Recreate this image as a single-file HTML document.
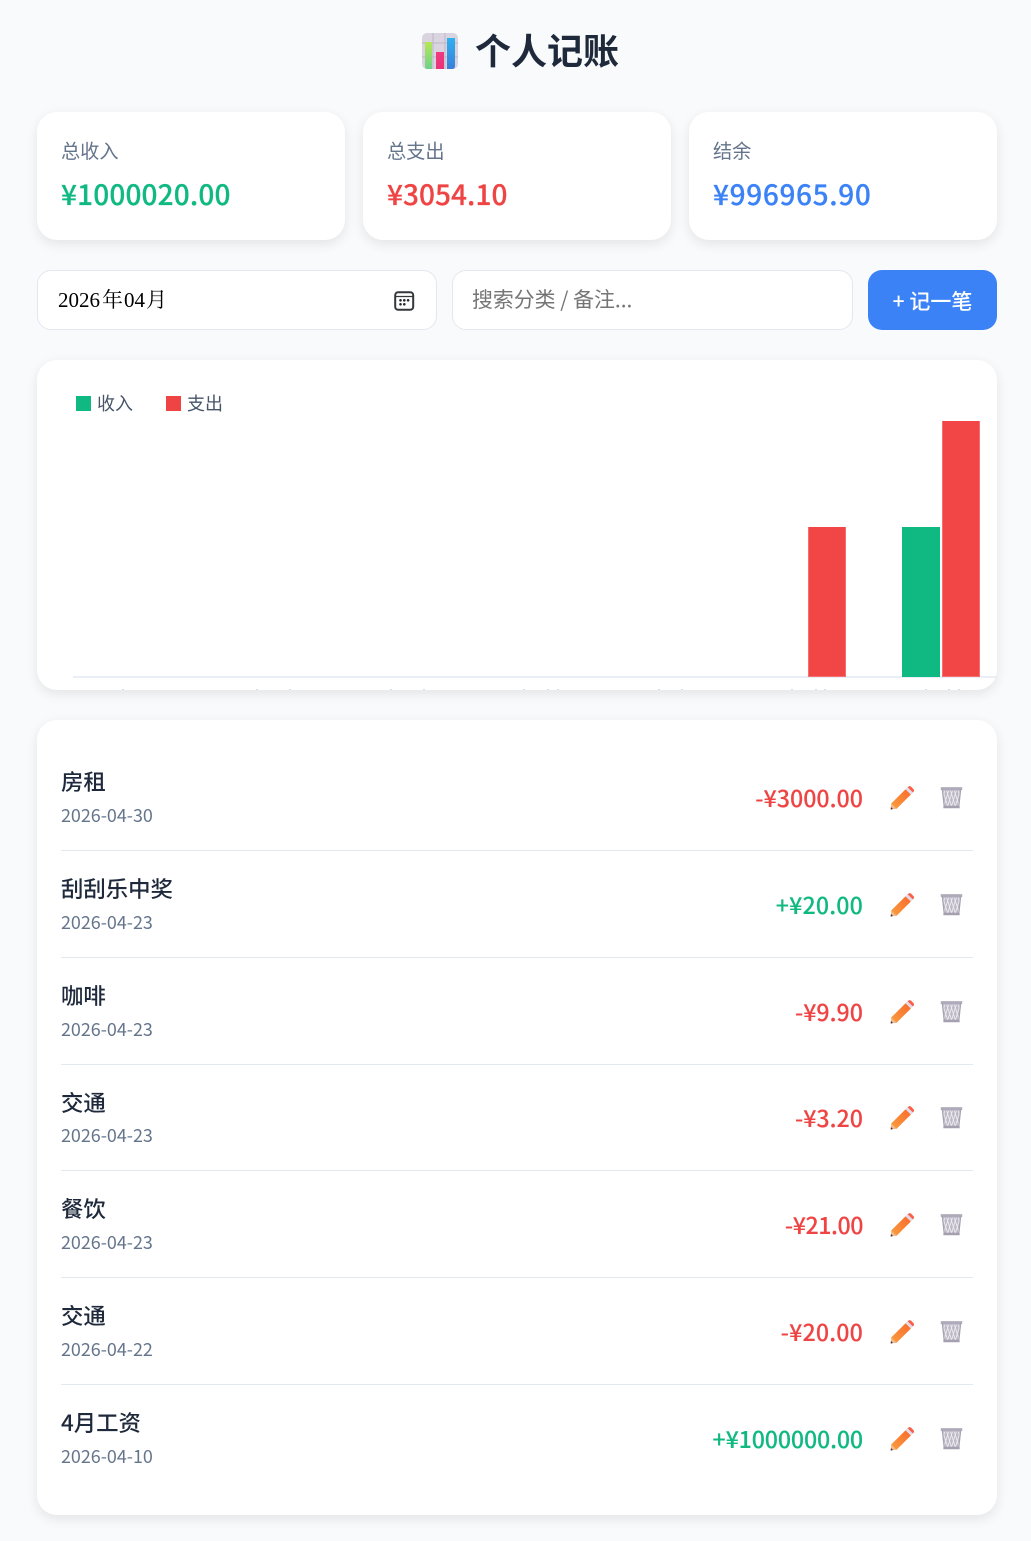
<!DOCTYPE html>
<html lang="zh-CN">
<head>
<meta charset="utf-8">
<title>个人记账</title>
<style>
*{box-sizing:border-box;margin:0;padding:0}
html,body{width:1031px;height:1541px;overflow:hidden;background:#f8fafc}
body{position:relative;font-family:"Liberation Sans","Noto Sans CJK SC",sans-serif;color:#1e293b}
.a{position:absolute;white-space:nowrap}
.card{position:absolute;background:#fff;border-radius:20px;box-shadow:0 4px 12px rgba(0,0,0,.09)}
.cjk{font-family:"Noto Sans CJK SC",sans-serif}
.lbl{font-family:"Noto Sans CJK SC",sans-serif;font-size:19.2px;line-height:24px;color:#64748b}
.val{font-family:"Noto Sans CJK SC",sans-serif;font-size:28px;line-height:36px;font-weight:500;-webkit-text-stroke:.2px currentColor}
.in{position:absolute;background:#fff;border:1px solid #e2e8f0;border-radius:14px}
.t{position:absolute;left:61px;font-family:"Noto Sans CJK SC",sans-serif;font-size:22.4px;line-height:28px;font-weight:500;color:#1e293b;white-space:nowrap}
.d{position:absolute;left:61px;font-family:"Noto Sans CJK SC",sans-serif;font-size:17.9px;line-height:22px;color:#64748b;white-space:nowrap}
.m{position:absolute;right:168px;font-family:"Noto Sans CJK SC",sans-serif;font-size:23.2px;line-height:30px;font-weight:500;white-space:nowrap;-webkit-text-stroke:.1px currentColor}
.r{color:#ef4444}.g{color:#10b981}.b{color:#3b82f6}
.hr{position:absolute;left:61px;width:912px;height:1px;background:#e2e8f0}
.ic{position:absolute}
.tk{position:absolute;top:689px;width:2px;height:1px;background:#d9dce1}
.bar{position:absolute;background:#f24545;border:solid #f56f6f;border-width:0 1px 1px 1px}
.dt{position:absolute;top:285px;font-family:"Liberation Serif","Noto Serif CJK SC",serif;font-size:21px;line-height:30px;color:#000;white-space:nowrap}
</style>
</head>
<body>
<svg width="0" height="0" style="position:absolute">
<defs>
<linearGradient id="pg" x1="0" y1="1" x2="1" y2="0"><stop offset="0" stop-color="#f9a03f"/><stop offset="1" stop-color="#f9692c"/></linearGradient>
<linearGradient id="b1" x1="0" y1="0" x2="0" y2="1"><stop offset="0" stop-color="#b5e853"/><stop offset="1" stop-color="#6fd08c"/></linearGradient>
<linearGradient id="b2" x1="0" y1="0" x2="0" y2="1"><stop offset="0" stop-color="#ef3a80"/><stop offset="1" stop-color="#e8327a"/></linearGradient>
<linearGradient id="b3" x1="0" y1="0" x2="0" y2="1"><stop offset="0" stop-color="#30b0f0"/><stop offset="1" stop-color="#3a80d8"/></linearGradient>
<symbol id="pencil" viewBox="0 0 24 24">
<path d="M1.3 17.4 15.6 3.2 20.9 8.5 6.6 22.7 0.9 23.3Z" fill="url(#pg)"/>
<path d="M1.3 17.4 6.6 22.7 0.9 23.3Z" fill="#f3b98a"/>
<path d="M0.9 21 2.9 23 0.7 23.6Z" fill="#3a2b3a"/>
<path d="M15.6 3.2 17.6 1.2 22.9 6.5 20.9 8.5Z" fill="#e3dbe8"/>
<path d="M17.6 1.2 19 .3Q20 -.2 21 .6L23.6 3.2Q24.3 4.2 23.8 5.4L22.9 6.5Z" fill="#f8604a"/>
</symbol>
<symbol id="trash" viewBox="0 0 24 24">
<path d="M1.8 3.2H22.2L20.2 21.5H3.8Z" fill="#bdb9c6"/>
<g stroke="#eeecf2" stroke-width=".9" fill="none">
<path d="M3 5 8 21M7 5 12 21M11 5 16 21M15 5 20 21M19 5 21 12M21 5 16 21M17 5 12 21M13 5 8 21M9 5 4 21M5 5 3 12"/>
</g>
<path d="M.8 1.2H23.2V4.2H.8Z" fill="#b0abba"/>
<path d="M3.5 20.6H20.5V23.2H3.5Z" fill="#a5a0b0"/>
<path d="M1.8 3.2 3.8 21H5L3.2 3.2ZM22.2 3.2 20.2 21H19L20.8 3.2Z" fill="#a8a3b3"/>
</symbol>
</defs>
</svg>

<!-- Title -->
<svg class="ic" style="left:422px;top:33px" width="36" height="36" viewBox="0 0 36 36">
<rect width="36" height="36" rx="5" fill="#d9d4e0"/>
<path d="M0 10H36M0 24H36M11 0V36M23 0V36" stroke="#bdb8c6" stroke-width="1"/>
<path d="M3 9H10V36H5Q3 36 3 34Z" fill="url(#b1)"/>
<rect x="14" y="19" width="8" height="17" fill="url(#b2)"/>
<path d="M25 5H33V33Q33 36 30 36H25Z" fill="url(#b3)"/>
</svg>
<div class="a cjk" style="left:475px;top:23px;font-size:36px;line-height:52px;font-weight:700;color:#1e293b">个人记账</div>

<!-- Summary cards -->
<div class="card" style="left:37px;top:112px;width:308px;height:128px"></div>
<div class="card" style="left:363px;top:112px;width:308px;height:128px"></div>
<div class="card" style="left:689px;top:112px;width:308px;height:128px"></div>
<div class="a lbl" style="left:61px;top:138px">总收入</div>
<div class="a lbl" style="left:387px;top:138px">总支出</div>
<div class="a lbl" style="left:713px;top:138px">结余</div>
<div class="a val g" style="left:61px;top:176px;letter-spacing:.15px">¥1000020.00</div>
<div class="a val r" style="left:387px;top:176px;letter-spacing:.05px">¥3054.10</div>
<div class="a val b" style="left:713px;top:176px;letter-spacing:.65px">¥996965.90</div>

<!-- Controls -->
<div class="in" style="left:37px;top:270px;width:400px;height:60px"></div>
<div class="dt" style="left:58px">2026</div>
<div class="dt" style="left:102px">年</div>
<div class="dt" style="left:124px">04</div>
<div class="dt" style="left:146px">月</div>
<svg class="ic" style="left:394px;top:291px" width="21" height="20" viewBox="0 0 21 20">
<rect x="1.2" y="1.2" width="18" height="17.6" rx="3" fill="none" stroke="#33373c" stroke-width="2"/>
<path d="M1.5 5.5H19" stroke="#33373c" stroke-width="1.3"/>
<g fill="#22262a"><circle cx="6.5" cy="9.3" r="1.3"/><circle cx="10.3" cy="9.3" r="1.3"/><circle cx="14.1" cy="9.3" r="1.3"/><circle cx="6.5" cy="13.3" r="1.3"/><circle cx="10.3" cy="13.3" r="1.3"/></g>
</svg>
<div class="in" style="left:452px;top:270px;width:401px;height:60px"></div>
<div class="a cjk" style="left:472px;top:284px;font-size:20.9px;line-height:30px;color:#757575">搜索分类 / 备注...</div>
<div class="a" style="left:868px;top:270px;width:129px;height:60px;background:#3b82f6;border-radius:14px"></div>
<div class="a cjk" style="left:868px;top:286px;width:129px;text-align:center;font-size:21px;line-height:30px;font-weight:500;color:#fff">+ 记一笔</div>

<!-- Chart -->
<div class="card" style="left:37px;top:360px;width:960px;height:330px"></div>
<div class="a" style="left:76px;top:396px;width:15px;height:15px;background:#10b981"></div>
<div class="a cjk" style="left:97px;top:391px;font-size:18px;line-height:25px;color:#475569">收入</div>
<div class="a" style="left:166px;top:396px;width:15px;height:15px;background:#ef4444"></div>
<div class="a cjk" style="left:187px;top:391px;font-size:18px;line-height:25px;color:#475569">支出</div>
<div class="a" style="left:73px;top:676px;width:924px;height:2px;background:#e9eef7"></div>
<div class="bar" style="left:808px;top:527px;width:38px;height:150px"></div>
<div class="a" style="left:902px;top:527px;width:38px;height:150px;background:#10b981"></div>
<div class="bar" style="left:942px;top:421px;width:38px;height:256px"></div>
<i class="tk" style="left:122px"></i><i class="tk" style="left:256px"></i><i class="tk" style="left:289px"></i><i class="tk" style="left:390px"></i><i class="tk" style="left:423px"></i><i class="tk" style="left:523px"></i><i class="tk" style="left:547px"></i><i class="tk" style="left:557px"></i><i class="tk" style="left:658px"></i><i class="tk" style="left:681px"></i><i class="tk" style="left:791px"></i><i class="tk" style="left:815px"></i><i class="tk" style="left:824px"></i><i class="tk" style="left:925px"></i><i class="tk" style="left:948px"></i><i class="tk" style="left:958px"></i>

<!-- List -->
<div class="card" style="left:37px;top:720px;width:960px;height:795px"></div>

<div class="t" style="top:767px">房租</div><div class="d" style="top:804px">2026-04-30</div><div class="m r" style="top:782px">-¥3000.00</div>
<svg class="ic" style="left:890px;top:786px" width="24" height="24"><use href="#pencil"/></svg><svg class="ic" style="left:940px;top:786px" width="23" height="23"><use href="#trash"/></svg>
<div class="hr" style="top:850px"></div>

<div class="t" style="top:874px">刮刮乐中奖</div><div class="d" style="top:911px">2026-04-23</div><div class="m g" style="top:889px;letter-spacing:.15px">+¥20.00</div>
<svg class="ic" style="left:890px;top:893px" width="24" height="24"><use href="#pencil"/></svg><svg class="ic" style="left:940px;top:893px" width="23" height="23"><use href="#trash"/></svg>
<div class="hr" style="top:957px"></div>

<div class="t" style="top:981px">咖啡</div><div class="d" style="top:1018px">2026-04-23</div><div class="m r" style="top:996px">-¥9.90</div>
<svg class="ic" style="left:890px;top:1000px" width="24" height="24"><use href="#pencil"/></svg><svg class="ic" style="left:940px;top:1000px" width="23" height="23"><use href="#trash"/></svg>
<div class="hr" style="top:1064px"></div>

<div class="t" style="top:1088px">交通</div><div class="d" style="top:1124px">2026-04-23</div><div class="m r" style="top:1102px">-¥3.20</div>
<svg class="ic" style="left:890px;top:1106px" width="24" height="24"><use href="#pencil"/></svg><svg class="ic" style="left:940px;top:1106px" width="23" height="23"><use href="#trash"/></svg>
<div class="hr" style="top:1170px"></div>

<div class="t" style="top:1194px">餐饮</div><div class="d" style="top:1231px">2026-04-23</div><div class="m r" style="top:1209px;letter-spacing:-.45px">-¥21.00</div>
<svg class="ic" style="left:890px;top:1213px" width="24" height="24"><use href="#pencil"/></svg><svg class="ic" style="left:940px;top:1213px" width="23" height="23"><use href="#trash"/></svg>
<div class="hr" style="top:1277px"></div>

<div class="t" style="top:1301px">交通</div><div class="d" style="top:1338px">2026-04-22</div><div class="m r" style="top:1316px;letter-spacing:.15px">-¥20.00</div>
<svg class="ic" style="left:890px;top:1320px" width="24" height="24"><use href="#pencil"/></svg><svg class="ic" style="left:940px;top:1320px" width="23" height="23"><use href="#trash"/></svg>
<div class="hr" style="top:1384px"></div>

<div class="t" style="top:1408px">4月工资</div><div class="d" style="top:1445px">2026-04-10</div><div class="m g" style="top:1423px;letter-spacing:-.15px">+¥1000000.00</div>
<svg class="ic" style="left:890px;top:1427px" width="24" height="24"><use href="#pencil"/></svg><svg class="ic" style="left:940px;top:1427px" width="23" height="23"><use href="#trash"/></svg>
</body>
</html>
